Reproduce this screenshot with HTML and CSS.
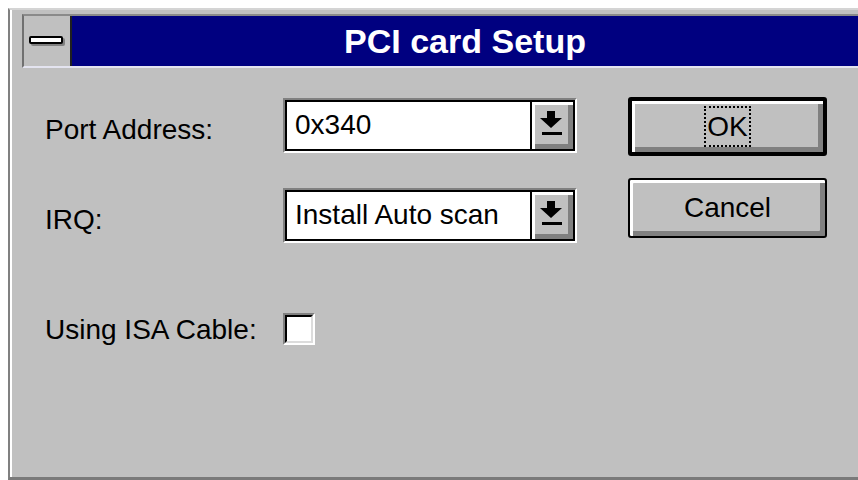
FILE: index.html
```html
<!DOCTYPE html>
<html>
<head>
<meta charset="utf-8">
<title>PCI card Setup</title>
<link rel="stylesheet" href="styles.css">
</head>
<body>
<div class="window">
  <div class="titlewrap">
    <div class="sysbox"><span class="sysbar"></span></div>
    <div class="caption">PCI card Setup</div>
  </div>
  <div class="content">
    <div class="fields">
      <div class="row">
        <label class="label">Port Address:</label>
        <div class="combo">
          <div class="combo-inner">
            <span class="combo-text">0x340</span>
            <span class="combo-btn">
              <svg width="41" height="47" viewBox="0 0 41 47">
                <path d="M15 9h8v7h7l-11 10l-11-10h7z" fill="#000"/>
                <rect x="10" y="30" width="20" height="3" fill="#000"/>
              </svg>
            </span>
          </div>
        </div>
      </div>
      <div class="row row2">
        <label class="label">IRQ:</label>
        <div class="combo">
          <div class="combo-inner">
            <span class="combo-text">Install Auto scan</span>
            <span class="combo-btn">
              <svg width="41" height="47" viewBox="0 0 41 47">
                <path d="M15 9h8v7h7l-11 10l-11-10h7z" fill="#000"/>
                <rect x="10" y="30" width="20" height="3" fill="#000"/>
              </svg>
            </span>
          </div>
        </div>
      </div>
      <div class="row row3">
        <label class="label">Using ISA Cable:</label>
        <div class="check"><div class="check-inner"></div></div>
      </div>
    </div>
    <div class="buttons">
      <button class="btn btn-default"><span class="focus">OK</span></button>
      <button class="btn btn-cancel">Cancel</button>
    </div>
  </div>
</div>
</body>
</html>
```

FILE: styles.css
```css
html, body {
  margin: 0;
  padding: 0;
}

body {
  background: #ffffff;
  width: 858px;
  height: 480px;
  overflow: hidden;
  padding: 8px 0 0 8px;
  box-sizing: border-box;
  font-family: "Liberation Sans", Arial, sans-serif;
  color: #000;
}

/* dialog window */
.window {
  width: 850px;
  height: 472px;
  box-sizing: border-box;
  background: #c0c0c0;
  border-left: 2px solid #808080;
  border-top: 2px solid #d4d4d4;
  border-bottom: 3px solid #7a7a7a;
  box-shadow: inset 2px 0 0 #ffffff;
  padding-top: 4px;
  display: flex;
  flex-direction: column;
}

/* title bar with system menu box */
.titlewrap {
  margin-left: 12px;
  border-top: 2px solid #8a8a8a;
  border-left: 2px solid #707070;
  border-bottom: 2px solid #e4e4f0;
  display: flex;
  height: 50px;
}

.sysbox {
  width: 46px;
  height: 50px;
  background: #c0c0c0;
  border-right: 2px solid #202020;
  position: relative;
}

.sysbar {
  position: absolute;
  left: 5px;
  top: 20px;
  width: 30px;
  height: 4px;
  background: #fff;
  border: 2px solid #000;
  border-radius: 2px;
  box-shadow: 2px 2px 0 #808080;
}

.caption {
  flex: 1;
  background: #000080;
  color: #fff;
  font-weight: bold;
  font-size: 34px;
  line-height: 50px;
  text-align: center;
}

/* dialog body */
.content {
  flex: 1;
  display: flex;
  padding-left: 35px;
}

.fields {
  margin-top: 30px;
  display: flex;
  flex-direction: column;
}

.row {
  display: flex;
  align-items: center;
  height: 55px;
}

.row2 {
  margin-top: 35px;
}

.row3 {
  margin-top: 70px;
  height: 32px;
}

.label {
  width: 238px;
  font-size: 28px;
  padding-top: 8px;
}

.row3 .label {
  padding-top: 2px;
}

/* drop-down combo box */
.combo {
  width: 294px;
  height: 55px;
  box-sizing: border-box;
  border: 2px solid;
  border-color: #808080 #ffffff #ffffff #808080;
}

.combo-inner {
  height: 100%;
  box-sizing: border-box;
  border: 2px solid #000;
  background: #fff;
  display: flex;
}

.combo-text {
  flex: 1;
  font-size: 28px;
  line-height: 45px;
  padding-left: 8px;
}

.combo-btn {
  width: 41px;
  border-left: 2px solid #000;
  background: #c0c0c0;
  box-shadow: inset 3px 3px 0 #fff, inset -5px -5px 0 #808080;
  display: block;
}

.combo-btn svg {
  display: block;
}

/* checkbox */
.check {
  width: 32px;
  height: 32px;
  box-sizing: border-box;
  border: 2px solid;
  border-color: #808080 #ffffff #ffffff #808080;
}

.check-inner {
  height: 100%;
  box-sizing: border-box;
  border: 2px solid;
  border-color: #000 #dcdcdc #dcdcdc #000;
  background: #fff;
}

/* push buttons */
.buttons {
  margin-top: 29px;
  margin-left: 51px;
  display: flex;
  flex-direction: column;
}

.btn {
  width: 199px;
  background: #c0c0c0;
  font-family: "Liberation Sans", Arial, sans-serif;
  font-size: 28px;
  color: #000;
  padding: 0;
  border: 2px solid #000;
  border-radius: 3px;
  box-shadow: inset 3px 3px 0 #fff, inset -5px -5px 0 #808080;
  display: flex;
  align-items: center;
  justify-content: center;
}

.btn-default {
  height: 59px;
  border-width: 4px;
}

.btn-cancel {
  height: 60px;
  margin-top: 22px;
}

.focus {
  border: 2px dotted #000;
  padding: 0 1px;
  line-height: 37px;
}
```
